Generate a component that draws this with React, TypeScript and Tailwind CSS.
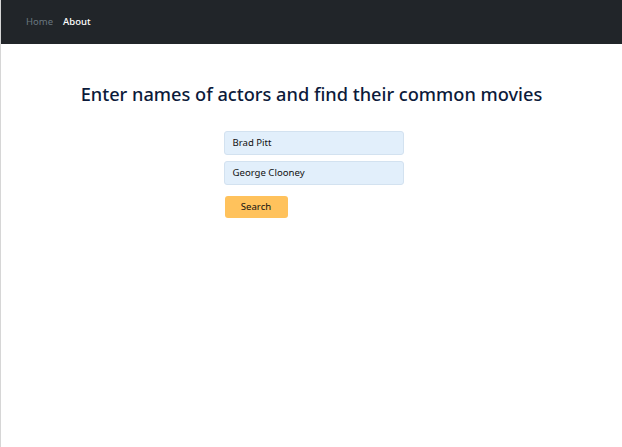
import React from "react";

export default function App() {
  return (
    <div
      className="min-h-[447px] w-full bg-white border-l border-[#d6d6d6]"
      style={{ fontFamily: '"Noto Sans", "Open Sans", sans-serif' }}
    >
      <nav className="h-[44px] bg-[#212529] flex items-center pl-[25px] gap-[10px] text-[9.5px]">
        <span className="text-[#6a7880]">Home</span>
        <span className="text-white font-medium">About</span>
      </nav>
      <h1 className="mt-[35px] text-center text-[18.2px] font-medium text-[#0c1a3a] leading-[30px]">
        Enter names of actors and find their common movies
      </h1>
      <div className="mt-[22px] flex justify-center pl-[4px]">
        <div className="w-[180px] flex flex-col">
          <div className="h-[24px] rounded-[3px] bg-[#e2effb] border border-[#d3e2f0] flex items-center pl-[8px] text-[9.6px] text-[#111]">
            Brad Pitt
          </div>
          <div className="mt-[6px] h-[24px] rounded-[3px] bg-[#e2effb] border border-[#d3e2f0] flex items-center pl-[8px] text-[9.6px] text-[#111]">
            George Clooney
          </div>
          <div className="mt-[11px] ml-[1px] w-[63px] h-[22px] rounded-[3px] bg-[#ffc25c] flex items-center justify-center text-[9.6px] text-[#111]">
            Search
          </div>
        </div>
      </div>
    </div>
  );
}
